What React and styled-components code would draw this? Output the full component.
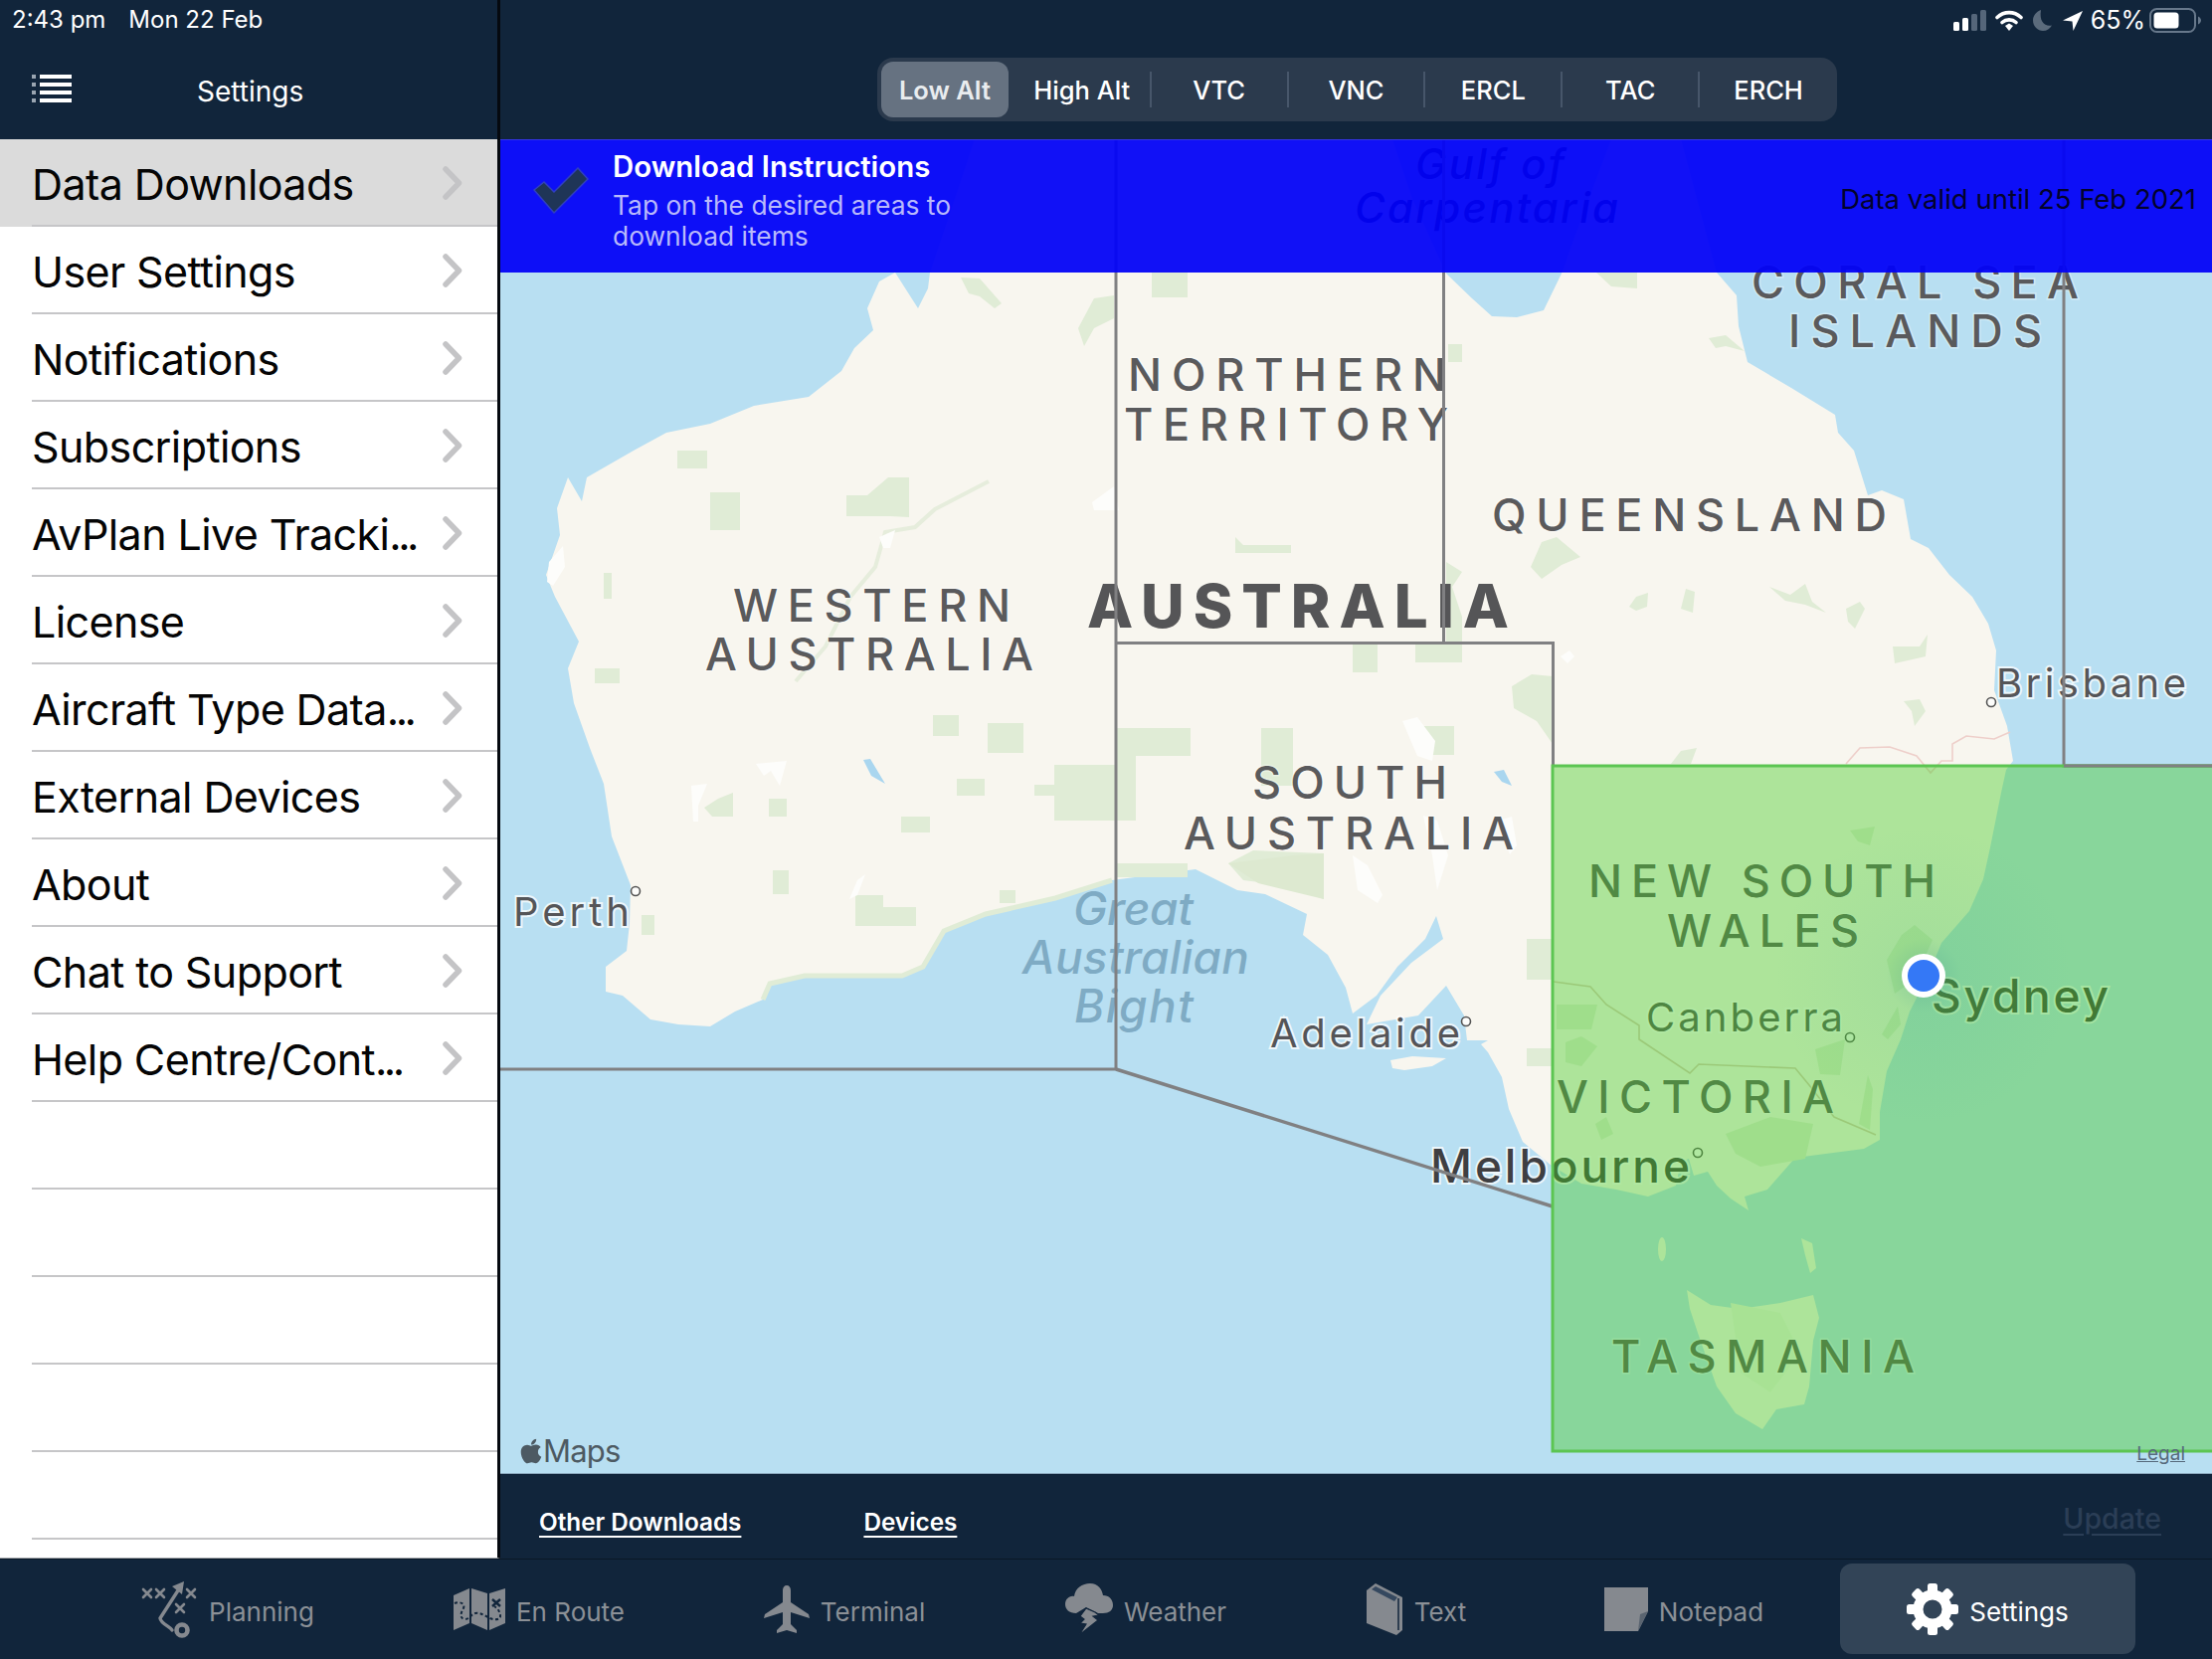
import React from 'react';
import styled, { createGlobalStyle } from 'styled-components';
import { FaApple } from 'react-icons/fa';

const menuItems = [
  'Data Downloads',
  'User Settings',
  'Notifications',
  'Subscriptions',
  'AvPlan Live Tracki...',
  'License',
  'Aircraft Type Data...',
  'External Devices',
  'About',
  'Chat to Support',
  'Help Centre/Cont...',
];

const chartTabs = ['Low Alt', 'High Alt', 'VTC', 'VNC', 'ERCL', 'TAC', 'ERCH'];

// map coordinates are screen pixels, the svg viewBox starts at the map's corner
const coast = `980,140 1400,140 1420,200 1454,275 1480,300 1500,318 1525,319 1552,312 1570,275 1590,220 1620,140
1690,140 1726,274 1746,297 1748,328 1757,364 1801,390 1845,417 1848,435 1864,453 1878,498 1892,493 1914,502 1921,542
1939,551 1960,578 1983,600 1999,627 2007,654 2005,694 2018,730 2024,765 2017,774 2012,797 2001,852 1994,884 1980,916
1952,948 1939,980 1920,1017 1911,1045 1897,1077 1890,1118 1890,1146 1874,1155 1805,1164 1777,1196 1754,1203 1758,1217
1740,1205 1726,1192 1717,1178 1703,1182 1698,1165 1690,1168 1685,1192 1657,1203 1625,1196 1590,1190 1560,1172 1531,1148
1517,1115 1510,1083 1496,1058 1489,1050 1496,1046 1475,1046 1472,1021 1454,991 1426,1021 1374,1030 1388,1001 1419,968
1451,944 1444,921 1433,944 1405,972 1384,1001 1360,1019 1353,993 1335,960 1310,940 1314,919 1272,899 1244,895 1202,874
1118,885 1061,903 991,919 949,936 928,972 907,981 865,981 809,981 774,989 767,1005 739,1017 714,1032 682,1030 654,1025
626,1001 609,997 609,972 630,956 633,928 634,890 615,841 607,788 593,752 577,707 571,672 582,645 558,600 549,578 563,538
560,511 571,480 585,504 590,480 637,453 670,435 714,426 758,408 813,399 846,373 859,350 878,332 872,310 884,283 900,274
923,310 933,290 935,274 960,200`;

const tasmania = '1696,1297 1720,1312 1749,1316 1790,1310 1823,1302 1829,1325 1823,1348 1819,1394 1814,1412 1786,1417 1772,1437 1745,1421 1726,1394 1708,1343 1699,1316';
const kangaroo = '1398,1066 1420,1062 1454,1064 1440,1072 1412,1076 1400,1074';

const parkBlocks = [
  [714, 495, 744, 533], [681, 453, 711, 471], [607, 576, 615, 602], [598, 672, 623, 687],
  [938, 719, 964, 740], [993, 727, 1029, 757], [962, 783, 990, 800], [1122, 732, 1197, 760],
  [1122, 760, 1142, 825], [1268, 732, 1300, 790], [906, 821, 935, 837], [773, 803, 791, 821],
  [777, 875, 793, 899], [1122, 868, 1194, 882], [1158, 274, 1194, 299], [645, 920, 658, 940],
  [1360, 647, 1385, 676], [1423, 647, 1470, 666], [1431, 730, 1462, 759], [1005, 895, 1021, 908],
  [1535, 944, 1560, 985], [1535, 1054, 1560, 1072], [1456, 346, 1470, 364],
];

const parkShapes = [
  '851,498 872,498 893,480 914,480 914,520 895,519 851,519',
  '1040,789 1060,789 1060,769 1142,769 1142,825 1060,825 1060,800 1040,800',
  '708,812 722,803 737,797 737,821 716,821',
  '860,900 888,900 888,912 921,912 921,931 860,931',
  '1235,868 1260,855 1331,858 1331,904 1290,890 1250,885',
  '966,279 985,280 1007,305 1000,310 985,298 974,295',
  '1084,330 1100,300 1120,297 1120,320 1100,330 1090,348',
  '1242,540 1250,548 1298,548 1298,556 1242,556',
  '1539,570 1550,545 1565,540 1589,560 1570,568 1550,582',
  '1638,610 1645,600 1657,596 1656,610 1645,614',
  '1690,612 1695,592 1704,595 1702,616',
  '1779,590 1800,598 1815,587 1822,605 1836,616 1815,608 1795,604',
  '1856,612 1870,605 1875,612 1865,632 1858,625',
  '1903,650 1930,650 1938,638 1936,660 1905,667',
  '1914,705 1930,703 1936,715 1925,730 1922,715',
  '1680,768 1690,755 1706,752 1700,768',
  '1718,340 1735,337 1754,353 1735,348 1725,350',
  '1605,274 1646,274 1646,290 1620,288',
  '1454,565 1470,575 1460,590 1470,620 1470,645 1454,645',
  '1520,690 1540,678 1561,680 1561,748 1545,725 1522,712',
  '1860,835 1885,831 1880,850 1868,846',
  '1897,965 1912,940 1925,930 1943,945 1925,985 1905,999',
  '1825,1055 1855,1045 1850,1081 1830,1080',
  '1892,1040 1908,1012 1911,1030 1898,1045',
  '1869,1130 1878,1081 1883,1095 1880,1136',
  '1735,1140 1780,1123 1823,1130 1815,1165 1770,1173 1745,1160',
  '1565,1010 1606,1010 1600,1035 1565,1035',
  '1574,1048 1590,1042 1606,1052 1590,1072 1574,1068',
  '1604,1130 1615,1123 1622,1140 1610,1146',
];

const saltLakes = [
  '1098,505 1120,489 1125,513 1100,513',
  '884,540 900,533 895,551 888,551',
  '550,585 552,565 566,549 568,570 556,589',
  '760,768 791,765 784,790 775,775 768,780',
  '695,790 711,788 702,810 702,826 697,826',
  '854,904 862,885 870,879 862,900',
  '1410,725 1425,721 1443,745 1440,765 1425,760',
  '1360,860 1375,870 1390,900 1385,908 1365,895',
  '1431,820 1445,825 1456,860 1445,895 1440,860',
  '1569,660 1578,654 1583,660 1576,667',
  '1506,825 1520,821 1525,850 1518,859',
];

const lakes = ['868,764 875,763 890,788 876,780', '1502,776 1512,774 1520,790 1510,786'];

const mapLabels = [
  { t: 'Gulf of', x: 1425, y: 180, w: 148, s: 42, tone: 'sea' },
  { t: 'Carpentaria', x: 1364, y: 224, w: 263, s: 42, tone: 'sea' },
  { t: 'WESTERN', x: 739, y: 625, w: 277, s: 45 },
  { t: 'AUSTRALIA', x: 711, y: 674, w: 328, s: 45 },
  { t: 'AUSTRALIA', x: 1095, y: 631, w: 422, s: 60, tone: 'bold' },
  { t: 'NORTHERN', x: 1136, y: 393, w: 318, s: 45 },
  { t: 'TERRITORY', x: 1132, y: 443, w: 324, s: 45 },
  { t: 'QUEENSLAND', x: 1502, y: 534, w: 395, s: 45 },
  { t: 'CORAL SEA', x: 1763, y: 300, w: 327, s: 45 },
  { t: 'ISLANDS', x: 1800, y: 349, w: 253, s: 45 },
  { t: 'SOUTH', x: 1261, y: 803, w: 194, s: 45 },
  { t: 'AUSTRALIA', x: 1192, y: 854, w: 330, s: 45 },
  { t: 'NEW SOUTH', x: 1599, y: 902, w: 347, s: 45 },
  { t: 'WALES', x: 1678, y: 952, w: 191, s: 45 },
  { t: 'VICTORIA', x: 1567, y: 1119, w: 277, s: 45 },
  { t: 'TASMANIA', x: 1622, y: 1380, w: 303, s: 45 },
  { t: 'Brisbane', x: 2009, y: 701, w: 189, s: 40, tone: 'city' },
  { t: 'Perth', x: 518, y: 931, w: 115, s: 40, tone: 'city' },
  { t: 'Adelaide', x: 1279, y: 1053, w: 189, s: 40, tone: 'city' },
  { t: 'Canberra', x: 1657, y: 1037, w: 196, s: 40, tone: 'city' },
  { t: 'Melbourne', x: 1440, y: 1189, w: 259, s: 46, tone: 'major' },
  { t: 'Sydney', x: 1944, y: 1018, w: 176, s: 46, tone: 'major' },
  { t: 'Great', x: 1081, y: 930, w: 119, s: 46, tone: 'bight' },
  { t: 'Australian', x: 1030, y: 979, w: 226, s: 46, tone: 'bight' },
  { t: 'Bight', x: 1082, y: 1028, w: 118, s: 46, tone: 'bight' },
];

const cityDots = [[2002, 706], [639, 896], [1474, 1027], [1707, 1159], [1860, 1043]];

const labelColours = {
  region: '#5a5a5c',
  bold: '#555557',
  city: '#555558',
  major: '#3f3f42',
  bight: '#7fabc4',
  sea: '#00004a',
};

const labelWeights = { bold: 800, major: 500, bight: 500, sea: 500, region: 500, city: 400 };

const GlobalStyle = createGlobalStyle`
  html, body {
    margin: 0;
    padding: 0;
    background: #11253b;
    font-family: Inter, "Noto Sans", "Liberation Sans", sans-serif;
  }
  * {
    box-sizing: border-box;
  }
`;

const Screen = styled.div`
  width: 2224px;
  height: 1668px;
  display: grid;
  grid-template-rows: 1567px 101px;
  overflow: hidden;
  background: #11253b;
`;

const Upper = styled.div`
  display: grid;
  grid-template-columns: 503px 1721px;
  min-height: 0;
`;

const Sidebar = styled.aside`
  display: flex;
  flex-direction: column;
  background: #fff;
  border-right: 3px solid #05090f;
  border-bottom: 1px solid #a9adb1;
  overflow: hidden;
`;

const SideHeader = styled.div`
  height: 140px;
  flex: none;
  background: #11253b;
  color: #fff;
`;

const StatusTime = styled.div`
  display: flex;
  gap: 23px;
  padding: 6px 0 0 12px;
  height: 58px;
  font-size: 24px;
  line-height: 28px;
`;

const NavRow = styled.div`
  display: grid;
  grid-template-columns: 166px auto;
  align-items: start;
  padding-left: 32px;
`;

const ListSlot = styled.div`
  padding-top: 17px;
  line-height: 0;
`;

const SideTitle = styled.div`
  font-size: 28px;
  line-height: 64px;
  margin-top: 2px;
`;

const Row = styled.div`
  height: 88px;
  flex: none;
  position: relative;
  display: flex;
  align-items: center;
  justify-content: space-between;
  padding: 0 35px 0 32px;
  background: ${(p) => (p.$active ? '#dbdbdb' : 'transparent')};
  font-size: 43px;
  color: #050505;
  &::after {
    content: '';
    position: absolute;
    left: 32px;
    right: 0;
    bottom: 0;
    height: 2px;
    background: #c6c6c8;
  }
`;

const RowLabel = styled.span`
  letter-spacing: -0.6px;
  white-space: nowrap;
  margin-top: 2px;
`;

const RowDots = styled.span`
  letter-spacing: -3.5px;
`;

const Content = styled.div`
  display: flex;
  flex-direction: column;
  min-height: 0;
`;

const TopBar = styled.div`
  height: 140px;
  flex: none;
`;

const StatusIcons = styled.div`
  height: 58px;
  display: flex;
  justify-content: flex-end;
  align-items: flex-start;
  gap: 9px;
  padding: 8px 11px 0 0;
  color: #fff;
`;

const StatusGlyph = styled.svg`
  flex: none;
  margin-top: ${(p) => p.$top || 0}px;
  margin-left: ${(p) => p.$left || 0}px;
  margin-right: ${(p) => p.$right || 0}px;
`;

const BatteryText = styled.span`
  font-size: 25px;
  line-height: 24px;
  margin-left: -1px;
`;

const ChartPill = styled.div`
  width: 965px;
  height: 64px;
  margin-left: 379px;
  display: grid;
  grid-template-columns: repeat(7, 1fr);
  align-items: center;
  background: #2b3a4d;
  border-radius: 16px;
`;

const ChartTab = styled.div`
  height: ${(p) => (p.$active ? '56px' : '36px')};
  margin: ${(p) => (p.$active ? '0 6px 0 4px' : '0')};
  display: flex;
  align-items: center;
  justify-content: center;
  font-size: 25.5px;
  font-weight: ${(p) => (p.$active ? 600 : 500)};
  color: ${(p) => (p.$active ? '#e9ecef' : '#fff')};
  background: ${(p) => (p.$active ? '#667281' : 'transparent')};
  border-radius: ${(p) => (p.$active ? '12px' : '0')};
  border-right: ${(p) => (p.$divider ? '2px solid #47566a' : '0')};
`;

const MapArea = styled.div`
  position: relative;
  flex: 1;
  min-height: 0;
  background: #b8dff2;
  border-bottom: 1px solid #8ba8bd;
`;

const MapSvg = styled.svg`
  display: block;
  width: 100%;
  height: 100%;
  font-family: Inter, "Noto Sans", sans-serif;
`;

const MapLabel = styled.text`
  font-size: ${(p) => p.$size}px;
  font-weight: ${(p) => labelWeights[p.$tone] || labelWeights.region};
  font-style: ${(p) => (p.$tone === 'bight' || p.$tone === 'sea' ? 'italic' : 'normal')};
  fill: ${(p) => labelColours[p.$tone] || labelColours.region};
  ${(p) => (p.$tone === 'city' || p.$tone === 'major' ? 'stroke: rgba(255,255,255,0.75); stroke-width: 4px; paint-order: stroke;' : '')}
  ${(p) => (!p.$tone ? 'stroke: rgba(255,255,255,0.35); stroke-width: 3px; paint-order: stroke;' : '')}
`;

const Banner = styled.div`
  position: absolute;
  top: 0;
  left: 0;
  right: 0;
  height: 134px;
  display: flex;
  padding: 10px 16px 0 33px;
  background: rgba(2, 2, 246, 0.94);
  border-top: 1px solid #3333e6;
`;

const CheckSvg = styled.svg`
  flex: none;
  margin-top: 17px;
`;

const BannerText = styled.div`
  margin-left: 24px;
  flex: 1;
`;

const BannerTitle = styled.div`
  font-size: 29.4px;
  font-weight: 600;
  line-height: 34px;
  color: #fff;
`;

const BannerBody = styled.div`
  font-size: 26.4px;
  line-height: 31px;
  margin-top: 6px;
  color: #b9b9fb;
`;

const ValidUntil = styled.div`
  font-size: 27.5px;
  line-height: 34px;
  margin-top: 32px;
  color: #03032c;
`;

const Attribution = styled.div`
  position: absolute;
  left: 17px;
  bottom: 0;
  display: flex;
  align-items: center;
  font-size: 31px;
  line-height: 44px;
  letter-spacing: -0.8px;
  color: #4d5a63;
  svg {
    margin-right: -2px;
  }
`;

const LegalLink = styled.span`
  position: absolute;
  right: 27px;
  bottom: 8px;
  font-size: 19px;
  color: #566a7b;
  text-decoration: underline;
`;

const SubBar = styled.div`
  height: 85px;
  flex: none;
  display: flex;
  align-items: center;
  padding: 0 51px 0 39px;
  gap: 123px;
  background: #11253b;
`;

const SubLink = styled.a`
  font-size: 24.3px;
  font-weight: 600;
  color: #fff;
  text-decoration: underline;
  text-underline-offset: 5px;
  margin-top: 10px;
`;

const UpdateLink = styled.a`
  margin-left: auto;
  margin-top: 3px;
  font-size: 28.5px;
  font-weight: 500;
  color: #2b3e56;
  text-decoration: underline;
  text-underline-offset: 5px;
`;

const TabBar = styled.nav`
  display: grid;
  grid-template-columns: 298px 328px 286px 320px 224px 314px 297px;
  padding: 4px 0 5px 80px;
  border-top: 1px solid #0a1826;
  background: #11253b;
`;

const TabItem = styled.div`
  display: flex;
  align-items: center;
  justify-content: center;
  gap: 11px;
  border-radius: 12px;
  font-size: 26px;
  color: ${(p) => (p.$active ? '#fff' : '#8b9096')};
  background: ${(p) => (p.$active ? '#324457' : 'transparent')};
`;

const TabLabel = styled.span`
  margin-top: 6px;
`;

const ListIcon = () => (
  <svg width="40" height="28" viewBox="0 0 40 28">
    {[0, 8, 16, 24].map((y) => (
      <g key={y}>
        <rect x="0" y={y} width="4" height="4" fill="#9aa5b1" />
        <rect x="8" y={y} width="32" height="4" fill="#fff" />
      </g>
    ))}
  </svg>
);

const Chevron = () => (
  <svg width="20" height="34" viewBox="0 0 20 34">
    <path d="M3 3 L16.5 17 L3 31" fill="none" stroke="#c4c4c6" strokeWidth="5.5" strokeLinecap="round" strokeLinejoin="round" />
  </svg>
);

const SignalIcon = () => (
  <StatusGlyph width="33" height="21" viewBox="0 0 33 21" $top={2}>
    <rect x="0" y="12" width="6" height="9" rx="1.5" fill="#fff" />
    <rect x="9" y="8" width="6" height="13" rx="1.5" fill="#fff" />
    <rect x="18" y="4" width="6" height="17" rx="1.5" fill="#55667a" />
    <rect x="27" y="0" width="6" height="21" rx="1.5" fill="#55667a" />
  </StatusGlyph>
);

const WifiIcon = () => (
  <StatusGlyph width="28" height="21" viewBox="0 0 28 21" $top={2}>
    <path d="M2 7.5 C9 1 19 1 26 7.5" fill="none" stroke="#fff" strokeWidth="3.6" strokeLinecap="round" />
    <path d="M7 12.5 C11 9 17 9 21 12.5" fill="none" stroke="#fff" strokeWidth="3.6" strokeLinecap="round" />
    <path d="M10 16 L14 13.5 L18 16 L14 21 Z" fill="#fff" />
  </StatusGlyph>
);

const MoonIcon = () => (
  <StatusGlyph width="19" height="21" viewBox="0 0 19 21" $top={2} $left={1} $right={2}>
    <path d="M8 0 C3 2 0 6 0 10.5 C0 16.5 5 21 10 21 C14 21 17 19 19 15.5 C12 17 6 12 8 0 Z" fill="#5b6b7c" />
  </StatusGlyph>
);

const ArrowIcon = () => (
  <StatusGlyph width="20" height="20" viewBox="0 0 20 20" $top={3}>
    <path d="M20 0 L0 9.5 L9.5 10.5 L10.5 20 Z" fill="#fff" />
  </StatusGlyph>
);

const BatteryIcon = () => (
  <StatusGlyph width="52" height="25" viewBox="0 0 52 25" $left={-5}>
    <rect x="1" y="1" width="45" height="23" rx="6.5" fill="none" stroke="#67788b" strokeWidth="2" />
    <rect x="4.5" y="4.5" width="25" height="16" rx="3.5" fill="#fff" />
    <path d="M49 8.5 C51 9.5 52 11 52 12.5 C52 14 51 15.5 49 16.5 Z" fill="#67788b" />
  </StatusGlyph>
);

const CheckIcon = () => (
  <CheckSvg width="56" height="48" viewBox="0 0 56 48">
    <path d="M1 23 L11 15 L21 25 L45 1 L55 12 L21 46 Z" fill="#1f3557" stroke="#2f3fc0" strokeWidth="1.5" />
  </CheckSvg>
);

const PlanningIcon = () => (
  <svg width="57" height="58" viewBox="0 0 57 58" fill="none" stroke="#85898f">
    <g strokeWidth="2.6" strokeLinecap="round">
      <path d="M2 9 L10 17 M10 9 L2 17" />
      <path d="M15 9 L23 17 M23 9 L15 17" />
      <path d="M46 9 L54 17 M54 9 L46 17" />
      <path d="M35 24 L43 32 M43 24 L35 32" />
    </g>
    <path d="M31 50 C29 46 20 44 19 38 L39 7" strokeWidth="3.4" strokeLinecap="round" strokeLinejoin="round" />
    <path d="M43 1 L31 6 L41 14 Z" fill="#85898f" stroke="none" />
    <circle cx="41" cy="50" r="5.5" strokeWidth="4.6" />
  </svg>
);

const RouteIcon = () => (
  <svg width="52" height="42" viewBox="0 0 52 42">
    <path d="M0 7 L16 0 L16 35 L0 42 Z M18 0 L34 5 L34 42 L18 35 Z M36 5 L52 0 L52 35 L36 42 Z" fill="#85898f" />
    <path d="M1 15 C6 13 12 15 10 20 C7 25 6 30 11 31 C17 31 17 26 22 25 C27 24 30 27 33 28 C38 32 48 33 47 27 C46 22 44 20 41 18" fill="none" stroke="#11253b" strokeWidth="2" strokeDasharray="3 2.5" />
    <path d="M39 11 L47 18 M47 11 L39 18" stroke="#11253b" strokeWidth="2.4" />
  </svg>
);

const PlaneIcon = () => (
  <svg width="46" height="48" viewBox="0 0 46 48">
    <path d="M23 0 C25.5 0 27 2 27 5 L27 17 L45 29 L46 33 L27 27 L27 39 L33 45 L33 48 L23 45 L13 48 L13 45 L19 39 L19 27 L0 33 L1 29 L19 17 L19 5 C19 2 20.5 0 23 0 Z" fill="#85898f" />
  </svg>
);

const WeatherIcon = () => (
  <svg width="48" height="52" viewBox="0 0 48 52">
    <path d="M11 30 C4 30 0 26 0 21 C0 16 4 12 9 13 C10 5 17 0 25 0 C33 0 37 6 38 12 C44 12 48 16 48 22 C48 27 44 30 38 30 L33 30 L21 24 Z" fill="#85898f" />
    <path d="M21 25 L30 29 L34 32 L28 33 L33 37 L14 52 L21 41 L15 40 L19 36 L15 33 Z" fill="#85898f" stroke="#11253b" strokeWidth="1.2" />
  </svg>
);

const BookIcon = () => (
  <svg width="37" height="52" viewBox="0 0 37 52">
    <path d="M0 7 L9 0 L36 14 L36 47 L30 52 L0 40 Z" fill="#85898f" />
    <path d="M5 6 L9 3 L31 14 L28 18 Z" fill="#35485f" />
    <path d="M32 15 L32 47" stroke="#11253b" strokeWidth="1.5" />
  </svg>
);

const NoteIcon = () => (
  <svg width="44" height="44" viewBox="0 0 44 44">
    <path d="M0 0 L44 0 L44 24 L34 44 L0 44 Z" fill="#85898f" />
    <path d="M34 44 L36 27 L44 24 Z" fill="#5a6470" />
  </svg>
);

const GearIcon = () => (
  <svg width="52" height="52" viewBox="0 0 52 52">
    <circle cx="26" cy="26" r="14.5" fill="none" stroke="#fff" strokeWidth="10" />
    {[0, 45, 90, 135, 180, 225, 270, 315].map((a) => (
      <rect key={a} x="21" y="0" width="10" height="10" rx="2.5" fill="#fff" transform={`rotate(${a} 26 26)`} />
    ))}
  </svg>
);

const tabs = [
  { label: 'Planning', Icon: PlanningIcon },
  { label: 'En Route', Icon: RouteIcon },
  { label: 'Terminal', Icon: PlaneIcon },
  { label: 'Weather', Icon: WeatherIcon },
  { label: 'Text', Icon: BookIcon },
  { label: 'Notepad', Icon: NoteIcon },
  { label: 'Settings', Icon: GearIcon, active: true },
];

const AustraliaMap = () => (
  <MapSvg viewBox="503 140 1721 1341" preserveAspectRatio="none">
    <defs>
      <radialGradient id="pinGlow">
        <stop offset="0" stopColor="#3f8f88" stopOpacity="0.35" />
        <stop offset="0.25" stopColor="#4aa5a0" stopOpacity="0.08" />
        <stop offset="1" stopColor="#4aa5a0" stopOpacity="0" />
      </radialGradient>
    </defs>
    <rect x="503" y="140" width="1721" height="1341" fill="#b8dff2" />
    <polygon points={coast} fill="#f8f6ef" />
    <polygon points={tasmania} fill="#f8f6ef" />
    <polygon points={kangaroo} fill="#f8f6ef" />
    <ellipse cx="1671" cy="1256" rx="4" ry="12" fill="#f8f6ef" />
    <polygon points="1811,1245 1822,1250 1826,1275 1820,1280 1815,1262" fill="#f8f6ef" />

    <polyline points="767,1005 774,989 809,981 865,981 907,981 928,972 949,936 991,919 1061,903 1118,885" fill="none" stroke="#e0ecd6" strokeWidth="5" />
    <polyline points="994,484 940,512 920,530 890,535 880,570 855,600 830,650 800,685" fill="none" stroke="#e6eddc" strokeWidth="4" />
    {parkBlocks.map(([x1, y1, x2, y2]) => (
      <rect key={`${x1}-${y1}`} x={x1} y={y1} width={x2 - x1} height={y2 - y1} fill="#e0ecd6" />
    ))}
    {parkShapes.map((p) => (
      <polygon key={p} points={p} fill="#e0ecd6" />
    ))}
    <polygon points="1235,868 1300,860 1331,858 1331,904 1265,888" fill="#dde9d0" />
    <polygon points="1740,1310 1790,1320 1810,1360 1780,1400 1750,1380" fill="#f0f3e6" />
    {saltLakes.map((p) => (
      <polygon key={p} points={p} fill="#fdfdfb" />
    ))}
    {lakes.map((p) => (
      <polygon key={p} points={p} fill="#a9d6ef" />
    ))}
    <polyline points="1856,768 1870,752 1900,751 1927,760 1941,777 1952,765 1963,765 1963,748 1977,740 2005,743 2021,736" fill="none" stroke="#eecfca" strokeWidth="1.6" />
    <polyline points="1562,987 1599,992 1615,1010 1648,1031 1648,1045 1699,1079 1708,1070 1805,1074 1819,1091 1844,1123 1886,1141" fill="none" stroke="#d9c9b6" strokeWidth="1.6" />

    {mapLabels.map((l) => (
      <MapLabel key={`${l.t}-${l.x}`} x={l.x - 2} y={l.y} $size={l.s} $tone={l.tone} textLength={l.w + 2} lengthAdjust="spacing">
        {l.t}
      </MapLabel>
    ))}
    {cityDots.map(([cx, cy]) => (
      <circle key={cx} cx={cx} cy={cy} r="4.5" fill="#fdfdfb" stroke="#555" strokeWidth="1.6" />
    ))}

    <g fill="none" stroke="#808082" strokeWidth="3">
      <path d="M1122 140 L1122 1075 L503 1075" />
      <path d="M1122 1075 L1561 1213" strokeWidth="3.5" />
      <path d="M1122 646.5 L1561.5 646.5 L1561.5 771" />
      <path d="M1451.5 140 L1451.5 646" />
      <path d="M2075 140 L2075 770 L2224 770" />
    </g>

    <rect x="1561" y="770" width="670" height="689" fill="#46ca23" fillOpacity="0.42" stroke="#5cc552" strokeWidth="3" />
    <circle cx="1934" cy="981" r="150" fill="url(#pinGlow)" />
    <path d="M2075 770 L2224 770" stroke="#808082" strokeWidth="3" />
    <circle cx="1934" cy="981" r="22" fill="#fff" />
    <circle cx="1934" cy="981" r="16" fill="#3478f6" />
  </MapSvg>
);

const App = () => (
  <Screen>
    <GlobalStyle />
    <Upper>
      <Sidebar>
        <SideHeader>
          <StatusTime>
            <span>2:43 pm</span>
            <span>Mon 22 Feb</span>
          </StatusTime>
          <NavRow>
            <ListSlot>
              <ListIcon />
            </ListSlot>
            <SideTitle>Settings</SideTitle>
          </NavRow>
        </SideHeader>
        {menuItems.map((item, i) => (
          <Row key={item} $active={i === 0}>
            {item.endsWith('...') ? (
              <RowLabel>
                {item.slice(0, -3)}
                <RowDots>...</RowDots>
              </RowLabel>
            ) : (
              <RowLabel>{item}</RowLabel>
            )}
            <Chevron />
          </Row>
        ))}
        {[0, 1, 2, 3, 4].map((n) => (
          <Row key={n} />
        ))}
      </Sidebar>

      <Content>
        <TopBar>
          <StatusIcons>
            <SignalIcon />
            <WifiIcon />
            <MoonIcon />
            <ArrowIcon />
            <BatteryText>65%</BatteryText>
            <BatteryIcon />
          </StatusIcons>
          <ChartPill>
            {chartTabs.map((tab, i) => (
              <ChartTab key={tab} $active={i === 0} $divider={i > 0 && i < 6}>
                {tab}
              </ChartTab>
            ))}
          </ChartPill>
        </TopBar>

        <MapArea>
          <AustraliaMap />
          <Banner>
            <CheckIcon />
            <BannerText>
              <BannerTitle>Download Instructions</BannerTitle>
              <BannerBody>
                Tap on the desired areas to
                <br />
                download items
              </BannerBody>
            </BannerText>
            <ValidUntil>Data valid until 25 Feb 2021</ValidUntil>
          </Banner>
          <Attribution>
            <FaApple size={28} />
            <span>Maps</span>
          </Attribution>
          <LegalLink>Legal</LegalLink>
        </MapArea>

        <SubBar>
          <SubLink>Other Downloads</SubLink>
          <SubLink>Devices</SubLink>
          <UpdateLink>Update</UpdateLink>
        </SubBar>
      </Content>
    </Upper>

    <TabBar>
      {tabs.map(({ label, Icon, active }) => (
        <TabItem key={label} $active={active}>
          <Icon />
          <TabLabel>{label}</TabLabel>
        </TabItem>
      ))}
    </TabBar>
  </Screen>
);

export default App;
